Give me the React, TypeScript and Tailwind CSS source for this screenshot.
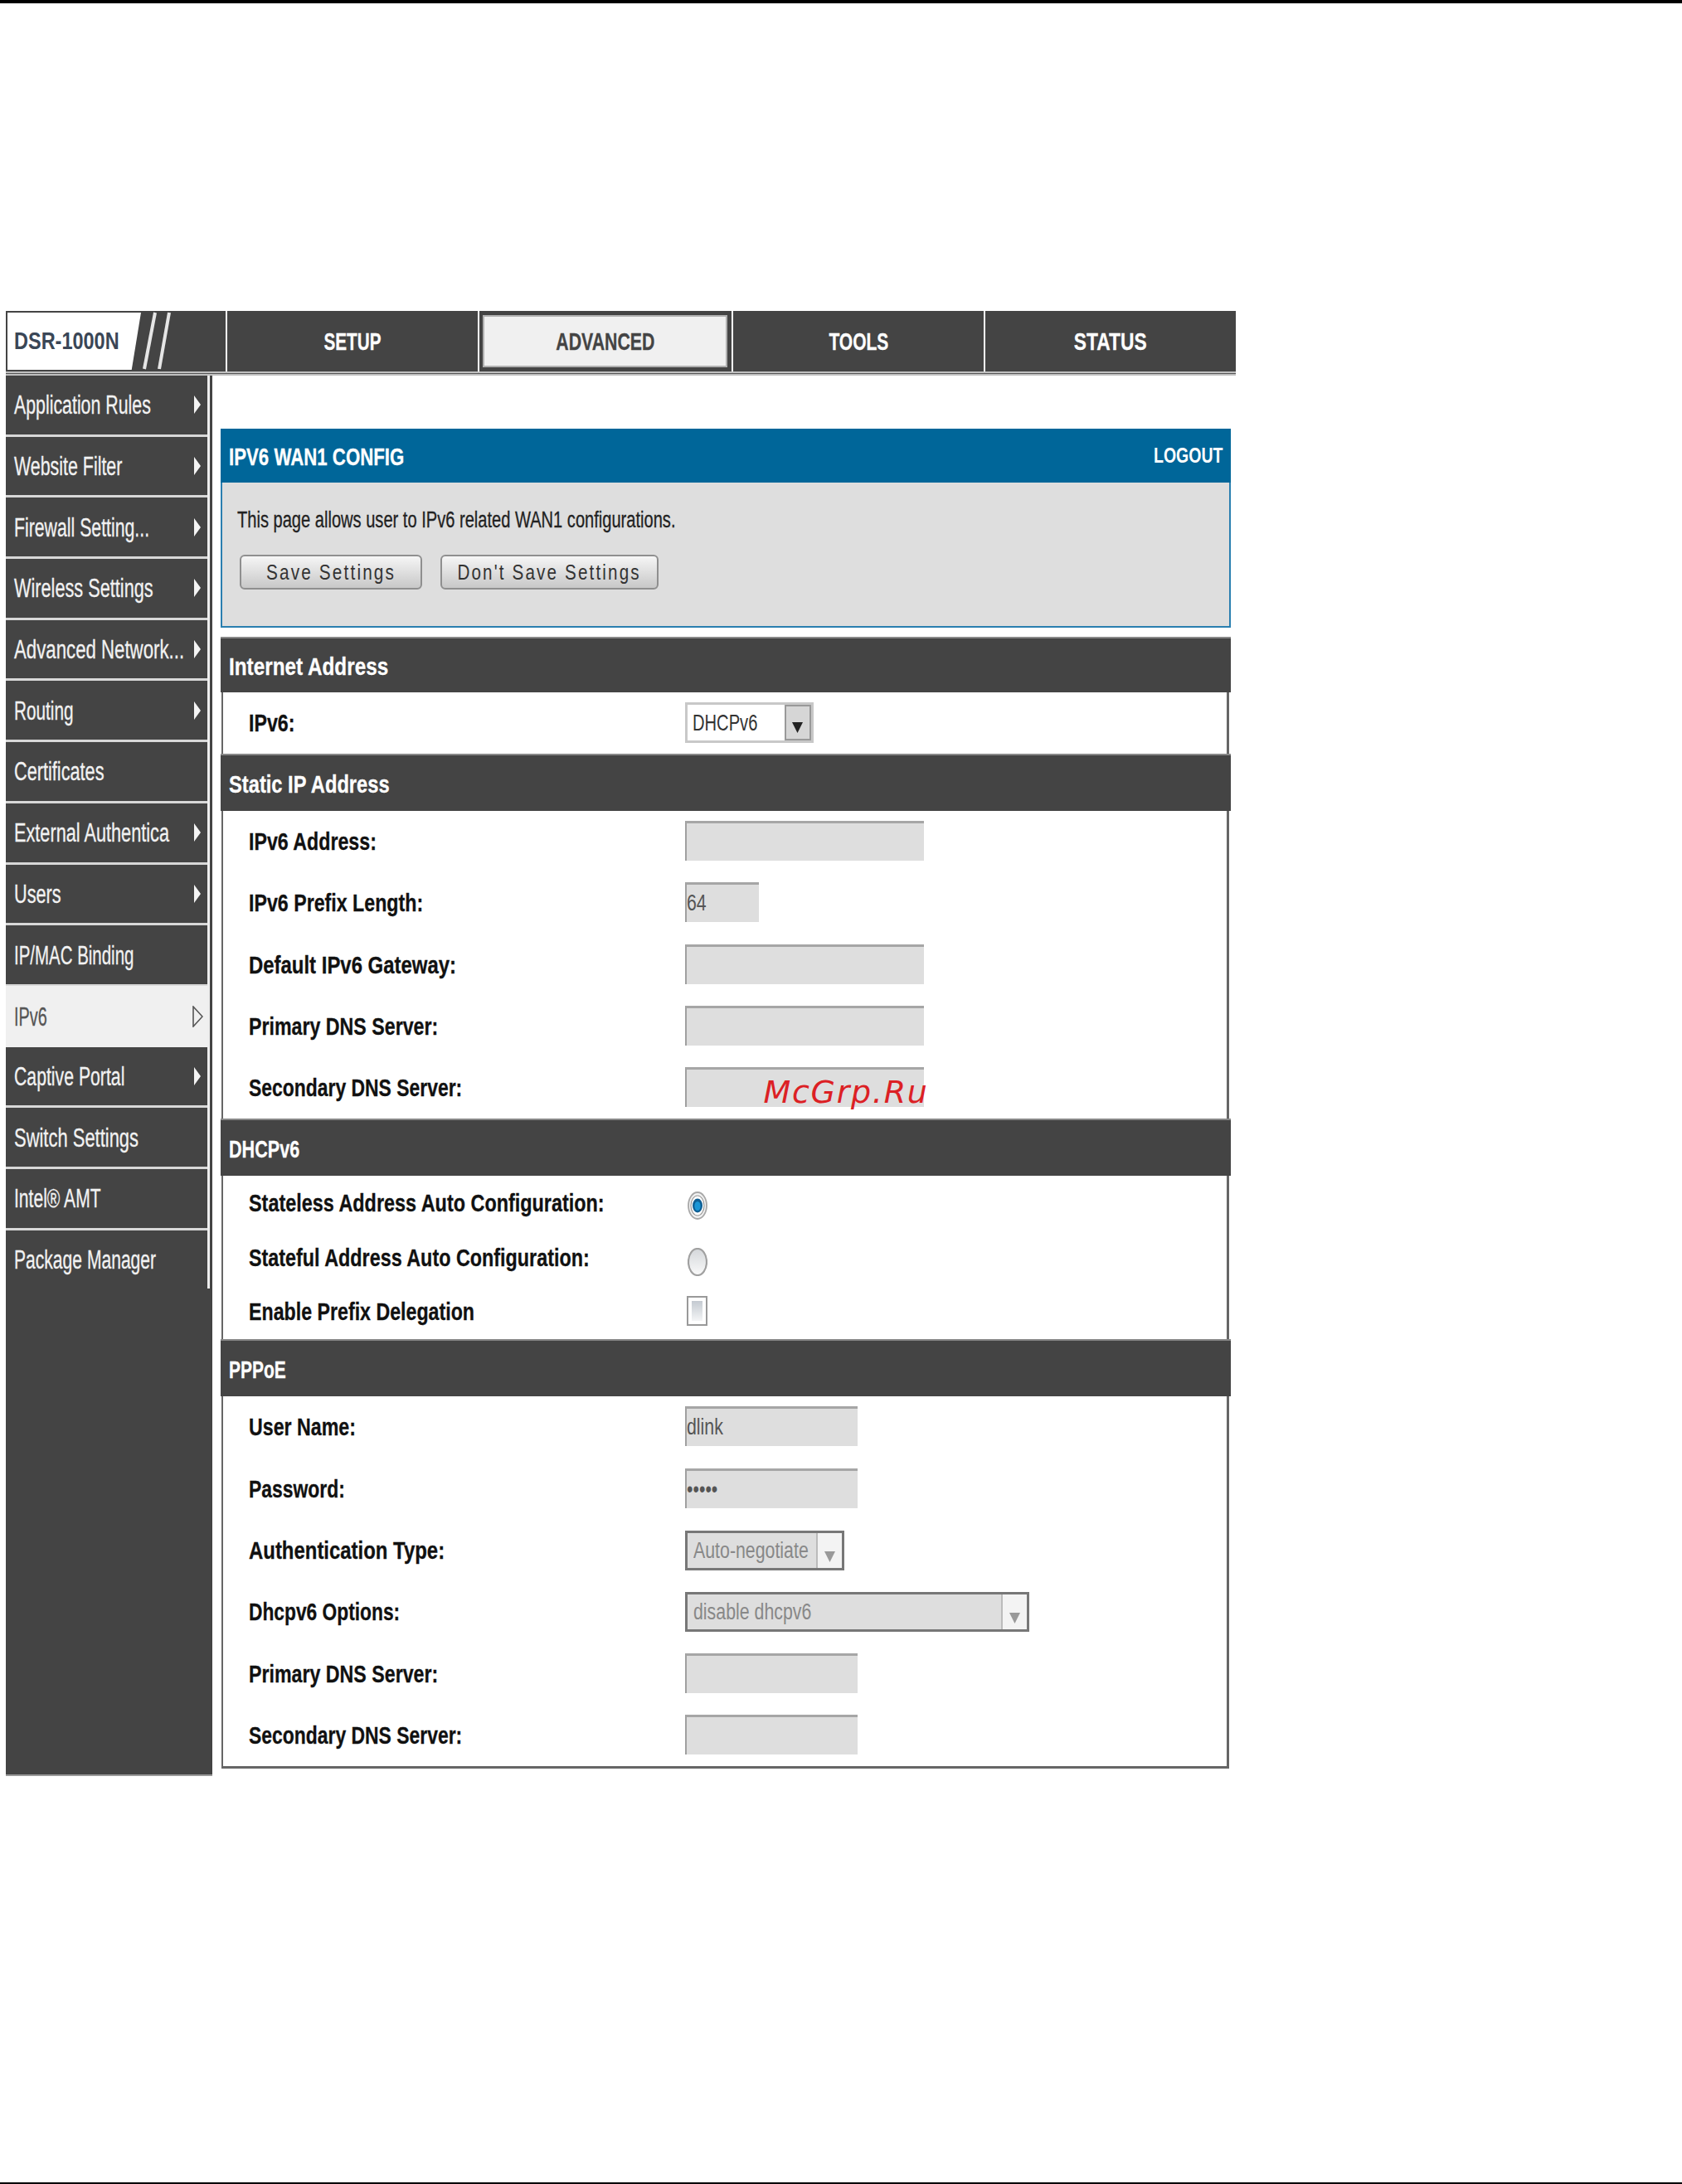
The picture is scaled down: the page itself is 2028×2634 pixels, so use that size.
const ARIAL = "font-['Liberation_Sans',Arial,sans-serif]";

const menu: [string, number, string][] = [
  ["Application Rules", 1, "scale-x-[0.688]"],
  ["Website Filter", 1, "scale-x-[0.69]"],
  ["Firewall Setting...", 1, "scale-x-[0.686]"],
  ["Wireless Settings", 1, "scale-x-[0.7]"],
  ["Advanced Network...", 1, "scale-x-[0.717]"],
  ["Routing", 1, "scale-x-[0.67]"],
  ["Certificates", 0, "scale-x-[0.7]"],
  ["External Authentica", 1, "scale-x-[0.7]"],
  ["Users", 1, "scale-x-[0.7]"],
  ["IP/MAC Binding", 0, "scale-x-[0.66]"],
  ["IPv6", 2, "scale-x-[0.64]"],
  ["Captive Portal", 1, "scale-x-[0.685]"],
  ["Switch Settings", 0, "scale-x-[0.708]"],
  ["Intel® AMT", 0, "scale-x-[0.68]"],
  ["Package Manager", 0, "scale-x-[0.68]"],
];

function MenuItem({ label, arrow, scale }: { label: string; arrow: number; scale: string }) {
  const active = arrow === 2;
  return (
    <div
      className={
        active
          ? "h-[73.7px] -mt-[1px] flex items-center pl-[10px] pr-[5px] bg-[#f0f0f0] text-[#555]"
          : "h-[70.7px] mb-[3px] flex items-center pl-[10px] pr-[8px] bg-[#444444] text-[#f2f2f2]"
      }
    >
      <span className="flex-1 min-w-0 pt-[3px]">
        <span className={`inline-block origin-left ${scale} whitespace-nowrap text-[31px] leading-none [-webkit-text-stroke:0.3px_currentColor]`}>{label}</span>
      </span>
      {arrow === 1 && (
        <svg width="8" height="22" viewBox="0 0 8 22" className="shrink-0">
          <polygon points="0,0 8,11 0,22" fill="#f4f4f4" />
        </svg>
      )}
      {arrow === 2 && (
        <svg width="13" height="26" viewBox="0 0 13 26" className="shrink-0">
          <polygon points="1,1 12,13 1,25" fill="none" stroke="#555" strokeWidth="1.6" />
        </svg>
      )}
    </div>
  );
}

function Tab({ label, active, scale }: { label: string; active?: boolean; scale: string }) {
  return (
    <div className="w-full h-full flex items-center justify-center">
      <span
        className={`inline-block origin-center ${scale} whitespace-nowrap text-[30px] font-bold leading-none [-webkit-text-stroke:0.3px_currentColor] ${active ? "text-[#444]" : "text-white"}`}
      >
        {label}
      </span>
    </div>
  );
}

function SectionBar({ title, h, scale }: { title: string; h: string; scale: string }) {
  return (
    <div className={`${h} bg-[#444444] border-t-2 border-[#888] flex items-center pl-[10px] pt-[2px]`}>
      <span className={`inline-block origin-left ${scale} whitespace-nowrap text-[30px] font-bold leading-none text-white [-webkit-text-stroke:0.3px_currentColor]`}>{title}</span>
    </div>
  );
}

function Row({ label, h, scale, children }: { label: string; h: string; scale?: string; children: React.ReactNode }) {
  return (
    <div className={`${h} flex items-center`}>
      <div className="w-[556.5px] pl-[31px] pt-[3px] shrink-0 overflow-visible">
        <span className={`inline-block origin-left ${scale ?? "scale-x-[0.8]"} whitespace-nowrap text-[29px] font-bold leading-none text-[#111] [-webkit-text-stroke:0.3px_currentColor]`}>{label}</span>
      </div>
      {children}
    </div>
  );
}

function Field({ w, value, children }: { w: string; value?: string; children?: React.ReactNode }) {
  return (
    <div className={`${w} relative h-[48px] mb-[2px] bg-[#dedede] border-t-[3px] border-l-2 border-t-[#a6a6a6] border-l-[#a0a0a0] flex items-center overflow-visible`}>
      {value && <span className="inline-block origin-left scale-x-[0.79] whitespace-nowrap text-[27px] leading-none text-[#555]">{value}</span>}
      {children}
    </div>
  );
}

function DisabledSelect({ w, value }: { w: string; value: string }) {
  return (
    <div className={`${w} h-[48px] mb-[1px] bg-[#dedede] border-[3px] border-[#777] flex items-stretch`}>
      <div className="flex-1 min-w-0 flex items-center pl-[7px] pt-[2px]">
        <span className="inline-block origin-left scale-x-[0.79] whitespace-nowrap text-[27px] leading-none text-[#888]">{value}</span>
      </div>
      <div className="w-[31px] shrink-0 bg-[#f3f3f3] border-l-2 border-[#bbb] flex items-end justify-center pb-[6px]">
        <svg width="15" height="15" viewBox="0 0 15 15">
          <polygon points="1,1 14,1 7.5,14" fill="#999" />
        </svg>
      </div>
    </div>
  );
}

export default function App() {
  return (
    <div className={`w-[2028px] h-[2634px] bg-white flex flex-col ${ARIAL}`}>
      <div className="h-[4px] bg-black shrink-0" />
      <div className="flex-1 min-h-0 pt-[371px] pl-[7px]">
        <div className="w-[1483px]">
          {/* Top navigation */}
          <div className="h-[73px] bg-[#444444] flex">
            <div className="w-[267px] h-full border-r-2 border-white flex">
              <div className="mt-[2px] ml-[2px] w-[161px] h-[69px] bg-white [clip-path:polygon(0_0,100%_0,93%_100%,0_100%)] flex items-center pl-[8px]">
                <span className="inline-block origin-left scale-x-[0.81] whitespace-nowrap text-[29px] font-bold leading-none text-[#3a4656]">DSR-1000N</span>
              </div>
              <svg width="50" height="73" viewBox="0 0 50 73" className="shrink-0">
                <line x1="17" y1="2" x2="4" y2="70" stroke="#e6e6e6" strokeWidth="4" />
                <line x1="34" y1="2" x2="22" y2="70" stroke="#e6e6e6" strokeWidth="4" />
              </svg>
            </div>
            <div className="w-[304px] h-full border-r-2 border-white">
              <Tab label="SETUP" scale="scale-x-[0.69]" />
            </div>
            <div className="w-[306px] h-full border-r-2 border-white pt-[5px] pb-[5px] pl-[4px] pr-[5px]">
              <div className="h-full bg-[#f0f0f0] border-2 border-[#b0b0b0]">
                <Tab label="ADVANCED" active scale="scale-x-[0.71]" />
              </div>
            </div>
            <div className="w-[304px] h-full border-r-2 border-white">
              <Tab label="TOOLS" scale="scale-x-[0.7]" />
            </div>
            <div className="flex-1 h-full">
              <Tab label="STATUS" scale="scale-x-[0.76]" />
            </div>
          </div>
          <div className="h-[5px] border-t-2 border-b-2 border-[#c0c0c0] bg-[#555]" />

          <div className="flex">
            {/* Sidebar */}
            <div className="w-[249px] h-[1689px] bg-[#444444] shrink-0 border-b-2 border-[#999]">
              <div className="w-[246px] border-r-[3px] border-[#eeeeee] bg-[#d8d8d8]">
                {menu.map(([label, arrow, scale]) => (
                  <MenuItem key={label} label={label} arrow={arrow} scale={scale} />
                ))}
              </div>
            </div>

            {/* Main content */}
            <div className="ml-[10px] w-[1218px] pt-[64px]">
              <div className="border-2 border-t-0 border-[#2a7fb0] bg-[#dedede] h-[240px] flex flex-col">
                <div className="h-[65px] -mx-[2px] bg-[#006699] flex items-center justify-between pl-[10px] pr-[9px] pt-[3px] shrink-0">
                  <span className="inline-block origin-left scale-x-[0.767] whitespace-nowrap text-[29px] font-bold leading-none text-white [-webkit-text-stroke:0.3px_currentColor]">IPV6 WAN1 CONFIG</span>
                  <span className="w-[84px]">
                    <span className="inline-block origin-left scale-x-[0.78] whitespace-nowrap text-[25px] font-bold leading-none text-white">LOGOUT</span>
                  </span>
                </div>
                <div className="pl-[18px] pt-[32px]">
                  <span className="inline-block origin-left scale-x-[0.744] whitespace-nowrap text-[27px] leading-none text-[#222] [-webkit-text-stroke:0.3px_currentColor]">
                    This page allows user to IPv6 related WAN1 configurations.
                  </span>
                </div>
                <div className="flex gap-[22px] pl-[21px] pt-[26px]">
                  <div className="w-[220px] h-[42px] rounded-[6px] border-2 border-[#8f8f8f] bg-gradient-to-b from-[#f6f6f6] to-[#c8c8c8] flex items-center justify-center">
                    <span className="inline-block origin-center scale-x-[0.83] whitespace-nowrap text-[25px] tracking-[2.6px] leading-none text-[#333]">Save Settings</span>
                  </div>
                  <div className="w-[263px] h-[42px] rounded-[6px] border-2 border-[#8f8f8f] bg-gradient-to-b from-[#f6f6f6] to-[#c8c8c8] flex items-center justify-center">
                    <span className="inline-block origin-center scale-x-[0.825] whitespace-nowrap text-[25px] tracking-[2.6px] leading-none text-[#333]">Don't Save Settings</span>
                  </div>
                </div>
              </div>

              <div className="mt-[11px] pb-[2px]">
                <SectionBar title="Internet Address" h="h-[67px]" scale="scale-x-[0.81]" />
                <div className="mx-[1px] mr-[2px] border-x-[3px] border-l-2 border-[#666]">
                  <Row label="IPv6:" h="h-[74px]">
                    <div className="w-[155px] h-[49px] mb-[1px] bg-white border-[3px] border-[#c8c8c8] flex items-stretch">
                      <div className="flex-1 min-w-0 flex items-center pl-[6px]">
                        <span className="inline-block origin-left scale-x-[0.72] whitespace-nowrap text-[28px] leading-none text-[#333]">DHCPv6</span>
                      </div>
                      <div className="w-[32px] shrink-0 bg-[#d6d6d6] border-2 border-[#999] flex items-end justify-center pb-[6px]">
                        <svg width="15" height="15" viewBox="0 0 15 15">
                          <polygon points="1,1 14,1 7.5,14" fill="#222" />
                        </svg>
                      </div>
                    </div>
                  </Row>
                </div>
                <SectionBar title="Static IP Address" h="h-[69px]" scale="scale-x-[0.79]" />
                <div className="mx-[1px] mr-[2px] border-x-[3px] border-l-2 border-[#666]">
                  <Row label="IPv6 Address:" h="h-[74.3px]"><Field w="w-[288px]" /></Row>
                  <Row label="IPv6 Prefix Length:" h="h-[74.3px]"><Field w="w-[89px]" value="64" /></Row>
                  <Row label="Default IPv6 Gateway:" h="h-[74.3px]" scale="scale-x-[0.825]"><Field w="w-[288px]" /></Row>
                  <Row label="Primary DNS Server:" h="h-[74.3px]"><Field w="w-[288px]" /></Row>
                  <Row label="Secondary DNS Server:" h="h-[74.3px]" scale="scale-x-[0.79]">
                    <Field w="w-[288px]">
                      <span className="absolute left-[93px] top-[8px] whitespace-nowrap font-['DejaVu_Sans',sans-serif] italic text-[38px] tracking-[1.7px] leading-none text-[#dc2024]">
                        McGrp.Ru
                      </span>
                    </Field>
                  </Row>
                </div>
                <SectionBar title="DHCPv6" h="h-[69px]" scale="scale-x-[0.72]" />
                <div className="mx-[1px] mr-[2px] border-x-[3px] border-l-2 border-[#666]">
                  <Row label="Stateless Address Auto Configuration:" h="h-[65.6px]" scale="scale-x-[0.807]">
                    <svg width="24" height="34" viewBox="0 0 24 34" className="ml-[3px] mt-[6px]">
                      <ellipse cx="12" cy="17" rx="11" ry="16" fill="#f2f2f2" stroke="#a8a8a8" strokeWidth="1.8" />
                      <ellipse cx="12" cy="17" rx="8" ry="12" fill="#fff" stroke="#999" strokeWidth="1.2" />
                      <ellipse cx="12" cy="17" rx="6" ry="8.5" fill="#0f5f94" />
                      <ellipse cx="12" cy="17.5" rx="3.6" ry="5.5" fill="#1a96d6" />
                    </svg>
                  </Row>
                  <Row label="Stateful Address Auto Configuration:" h="h-[65.6px]" scale="scale-x-[0.805]">
                    <svg width="24" height="34" viewBox="0 0 24 34" className="ml-[3px] mt-[10px]">
                      <defs>
                        <linearGradient id="rg" x1="0" y1="0" x2="0" y2="1">
                          <stop offset="0" stopColor="#d4d7da" />
                          <stop offset="1" stopColor="#fafafa" />
                        </linearGradient>
                      </defs>
                      <ellipse cx="12" cy="17" rx="11" ry="16" fill="url(#rg)" stroke="#a0a0a0" strokeWidth="2.2" />
                    </svg>
                  </Row>
                  <Row label="Enable Prefix Delegation" h="h-[65.6px]">
                    <div className="ml-[2px] mb-[2px] w-[25px] h-[36px] border-2 border-[#999] p-[4px] bg-white">
                      <div className="w-full h-full bg-gradient-to-b from-[#c4cad1] to-[#f4f5f6]" />
                    </div>
                  </Row>
                </div>
                <SectionBar title="PPPoE" h="h-[69px]" scale="scale-x-[0.7]" />
                <div className="mx-[1px] mr-[2px] border-x-[3px] border-l-2 border-b-[3px] border-[#666]">
                  <Row label="User Name:" h="h-[74.3px]"><Field w="w-[208px]" value="dlink" /></Row>
                  <Row label="Password:" h="h-[74.3px]" scale="scale-x-[0.79]"><Field w="w-[208px]" value="•••••" /></Row>
                  <Row label="Authentication Type:" h="h-[74.3px]" scale="scale-x-[0.825]"><DisabledSelect w="w-[192px]" value="Auto-negotiate" /></Row>
                  <Row label="Dhcpv6 Options:" h="h-[74.3px]" scale="scale-x-[0.785]"><DisabledSelect w="w-[415px]" value="disable dhcpv6" /></Row>
                  <Row label="Primary DNS Server:" h="h-[74.3px]"><Field w="w-[208px]" /></Row>
                  <Row label="Secondary DNS Server:" h="h-[74.3px]" scale="scale-x-[0.79]"><Field w="w-[208px]" /></Row>
                </div>
              </div>
            </div>
          </div>
        </div>
      </div>
      <div className="h-[2px] bg-black shrink-0" />
    </div>
  );
}
